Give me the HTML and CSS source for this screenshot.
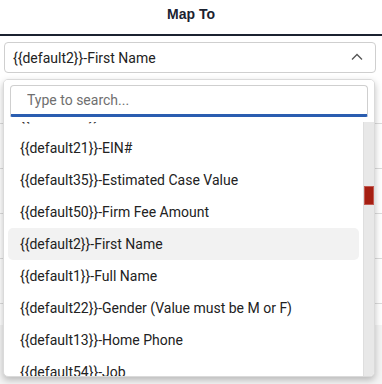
FILE: index.html
```html
<!DOCTYPE html>
<html>

<head>
  <meta charset="utf8">
  <title>Map To</title>
  <link rel="stylesheet" href="styles.css">
</head>

<body>
  <div class="encabezado">Map To</div>

  <div class="campo">
    <div class="selector">
      <span>{{default2}}-First Name</span>
      <svg class="flecha" width="12" height="8" viewBox="0 0 12 8">
        <path d="M1 6.5 L6 1.5 L11 6.5" fill="none" stroke="#555" stroke-width="1.3"/>
      </svg>
    </div>
  </div>

  <!-- tabla que queda detras del desplegable -->
  <div class="tabla">
    <div class="fila"></div>
    <div class="fila"></div>
    <div class="fila"></div>
    <div class="fila"></div>
    <div class="fila"></div>
  </div>
  <div class="pie"></div>

  <!-- desplegable abierto -->
  <div class="desplegable">
    <div class="buscador">
      <input type="text" placeholder="Type to search...">
    </div>
    <div class="zona-lista">
      <ul class="lista">
        <li>{{default20}}-Email</li>
        <li>{{default21}}-EIN#</li>
        <li>{{default35}}-Estimated Case Value</li>
        <li>{{default50}}-Firm Fee Amount</li>
        <li class="activo">{{default2}}-First Name</li>
        <li>{{default1}}-Full Name</li>
        <li>{{default22}}-Gender (Value must be M or F)</li>
        <li>{{default13}}-Home Phone</li>
        <li>{{default54}}-Job</li>
      </ul>
      <div class="pista">
        <div class="marca"></div>
      </div>
    </div>
  </div>
</body>

</html>
```

FILE: styles.css
```css
/* Estilos generales */
body {
  margin: 0;
  font-family: Roboto, "Liberation Sans", sans-serif;
  color: #222;
  background: #fff;
}

/* Titulo */
.encabezado {
  height: 34px;
  line-height: 29px;
  text-align: center;
  font-family: "Liberation Sans", Arial, sans-serif;
  font-weight: bold;
  font-size: 14px;
  color: #1b2230;
  border-bottom: 2px solid #1b2230;
}

/* Campo del selector */
.campo {
  padding: 6px 6px 0 4px;
}

.selector {
  height: 29px;
  border: 1px solid #cfcfcf;
  border-radius: 4px;
  display: flex;
  align-items: center;
  justify-content: space-between;
  padding: 0 12px 0 8px;
  font-size: 14px;
}

.flecha {
  margin-top: -2px;
}

/* Tabla de fondo */
.tabla {
  margin-top: 6px;
}

.fila {
  height: 44px;
  border-bottom: 1px solid #dcdcdc;
}

.pie {
  margin-top: 21px;
  height: 60px;
  background: #f4f4f4;
}

/* Desplegable */
.desplegable {
  position: absolute;
  left: 3px;
  top: 79px;
  width: 370px;
  height: 296px;
  background: #fff;
  border: 1px solid #dadada;
  border-radius: 5px;
  box-shadow: 0 3px 7px rgba(0, 0, 0, 0.25);
  display: flex;
  flex-direction: column;
  overflow: hidden;
}

.buscador {
  padding: 5px 6px 0 6px;
  position: relative;
  z-index: 1;
  background: #fff;
}

.buscador input {
  box-sizing: border-box;
  width: 100%;
  height: 32px;
  border: 1px solid #cfcfcf;
  border-bottom: 3px solid #2a5db0;
  border-radius: 4px 4px 2px 2px;
  padding: 0 0 0 16px;
  font-family: Roboto, sans-serif;
  font-size: 14px;
  outline: none;
}

.buscador input::placeholder {
  color: #6f6f6f;
}

.zona-lista {
  flex: 1;
  display: flex;
  overflow: hidden;
  margin-top: 5px;
}

.lista {
  flex: 1;
  list-style: none;
  margin: -22px 0 0 0;
  padding: 0 4px;
}

.lista li {
  height: 32px;
  line-height: 32px;
  padding-left: 12px;
  font-size: 14px;
  border-radius: 5px;
  white-space: nowrap;
}

.lista li.activo {
  background: #f2f2f2;
}

/* Barra de desplazamiento */
.pista {
  width: 10px;
  margin-top: -2px;
  background: #e8e8e8;
  border-left: 1px solid #dedede;
}

.marca {
  margin-top: 66px;
  height: 17px;
  background: #a51f12;
  border: 1px solid #c25a52;
}
```
